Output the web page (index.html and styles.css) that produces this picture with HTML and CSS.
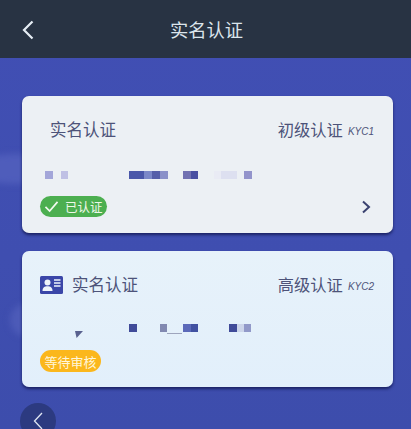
FILE: index.html
```html
<!DOCTYPE html>
<html lang="zh">
<head>
<meta charset="utf-8">
<title>实名认证</title>
<link rel="stylesheet" href="styles.css">
</head>
<body>
<div class="page">
  <header class="topbar">
    <svg class="back" viewBox="0 0 12 20" aria-hidden="true"><path d="M10.5 1.5 2 10l8.500 8.500"/></svg>
    <h1 class="title">实名认证</h1>
  </header>
  <span class="blob blob-a"></span>
  <span class="blob blob-b"></span>
  <main class="content">
    <section class="card card-basic">
      <div class="head">
        <span class="name name-indent">实名认证</span>
        <span class="level">初级认证<i class="kyc">KYC1</i></span>
      </div>
      <div class="mosaic mosaic-basic"></div>
      <div class="foot">
        <span class="badge badge-ok">
          <svg class="tick" viewBox="0 0 16 14" aria-hidden="true"><path d="M1.500 7.500 6 12 14.500 2"/></svg>已认证
        </span>
        <svg class="more" viewBox="0 0 10 14" aria-hidden="true"><path d="M2 1.500 8 7l-6 5.500"/></svg>
      </div>
    </section>
    <section class="card card-pending">
      <div class="head">
        <span class="name-wrap">
          <svg class="idcard" viewBox="0 0 23 18" aria-hidden="true">
            <rect width="23" height="18" rx="1.500" fill="#3a46a8"/>
            <circle cx="7.500" cy="6.500" r="3" fill="#eef3fb"/>
            <path d="M2.500 15c0-3.500 2-4.800 5-4.800s5 1.300 5 4.800z" fill="#eef3fb"/>
            <path d="M14 4h6.500M14 7h6.500M14 10h6.500" stroke="#eef3fb" stroke-width="1.300"/>
          </svg>
          <span class="name">实名认证</span>
        </span>
        <span class="level">高级认证<i class="kyc">KYC2</i></span>
      </div>
      <div class="mosaic mosaic-pending"></div>
      <div class="foot">
        <span class="badge badge-wait">等待审核</span>
      </div>
    </section>
  </main>
  <button class="float-back" type="button" aria-label="返回">
    <svg viewBox="0 0 12 20" aria-hidden="true"><path d="M10 2 2.500 10l7.500 8"/></svg>
  </button>
</div>
</body>
</html>
```
FILE: styles.css
```css
* { box-sizing: border-box; }
html, body { margin: 0; padding: 0; }
body {
  width: 411px;
  height: 429px;
  overflow: hidden;
  font-family: "Noto Sans CJK SC", "Liberation Sans", sans-serif;
}
.page {
  position: relative;
  width: 411px;
  height: 429px;
  overflow: hidden;
  background: linear-gradient(180deg, #414fb4 0%, #3f4eb0 60%, #3d4dac 100%);
}
.topbar {
  position: relative;
  height: 58px;
  background: #283343;
  display: flex;
  align-items: center;
  justify-content: center;
}
.back {
  position: absolute;
  left: 22px;
  top: 20px;
  width: 12px;
  height: 20px;
  fill: none;
  stroke: #e6eef4;
  stroke-width: 2.200;
}
.title {
  margin: 0 0 0 2px;
  font-size: 18.300px;
  font-weight: 400;
  line-height: 24px;
  color: #dce5ec;
}
.blob {
  position: absolute;
  border-radius: 50%;
}
.blob-a {
  left: -30px;
  top: 154px;
  width: 90px;
  height: 30px;
  background: #4f5dbb;
  filter: blur(3px);
}
.blob-b {
  left: 10px;
  top: 304px;
  width: 30px;
  height: 32px;
  background: #4d5bb8;
  filter: blur(3px);
}
.content {
  position: relative;
  padding: 38px 18px 0 22px;
  display: flex;
  flex-direction: column;
  gap: 18px;
}
.card {
  border-radius: 7px;
  padding: 21px 19px 16px 18px;
  box-shadow: 0 2px 3px rgba(18, 22, 80, .8);
}
.card-basic {
  height: 137px;
  background: #ecf0f4;
}
.card-pending {
  height: 136px;
  background: linear-gradient(180deg, #e7f2fa 0%, #e2effb 100%);
}
.head {
  display: flex;
  justify-content: space-between;
  align-items: center;
  height: 24px;
  color: #4d5379;
}
.name {
  font-size: 16.500px;
  line-height: 24px;
}
.name-indent { margin-left: 10px; }
.name-wrap {
  display: flex;
  align-items: center;
  gap: 9px;
}
.idcard {
  width: 23px;
  height: 18px;
  margin-top: 1px;
}
.level {
  font-size: 16.300px;
  line-height: 24px;
  display: flex;
  align-items: center;
}
.kyc {
  margin: 5px 0 0 5px;
  font-family: "Liberation Sans", sans-serif;
  font-size: 10px;
  font-style: italic;
}
.mosaic {
  position: relative;
  width: 212px;
  height: 8px;
  margin-left: 4px;
  filter: blur(.4px);
}
.mosaic-basic {
  margin-top: 30px;
  background: linear-gradient(90deg,
    transparent 1px, #a3a6d9 1px 9px, transparent 9px 17px, #bfc0e4 17px 24px, transparent 24px 85px,
    #4a57a9 85px 100px, #7b88c8 100px 108px, #555fa9 108px 116px, #8b91c9 116px 124px, transparent 124px 139px,
    #7272b2 139px 147px, #4a50a2 147px 154px, transparent 154px 170px,
    #e9ebf4 170px 177px, #dde0f0 177px 193px, transparent 193px 200px, #9394cb 200px 208px, transparent 208px);
}
.mosaic-pending {
  margin-top: 28px;
  background: linear-gradient(90deg,
    transparent 85px, #404b99 85px 93px, transparent 93px 116px, #8189b1 116px 123px, transparent 123px 139px,
    #5b69b9 139px 147px, #4151a1 147px 154px, transparent 154px 185px,
    #404b99 185px 193px, #ccd5ea 193px 200px, #9199c9 200px 207px, transparent 207px);
}
.mosaic-pending::before {
  content: "";
  position: absolute;
  left: 31px;
  top: 7px;
  width: 8px;
  height: 7px;
  background: #59618f;
  clip-path: polygon(0 0, 100% 0, 20% 100%);
}
.mosaic-pending::after {
  content: "";
  position: absolute;
  left: 123px;
  top: 9px;
  width: 15px;
  height: 1px;
  background: #9ea5bd;
}
.foot {
  display: flex;
  justify-content: space-between;
  align-items: center;
  margin-top: 17px;
}
.card-pending .foot { margin-top: 18px; }
.badge {
  display: inline-flex;
  align-items: center;
  height: 21px;
  border-radius: 11px;
  font-size: 12.500px;
  line-height: 21px;
  color: #eef8e8;
}
.badge-ok {
  width: 67px;
  padding-left: 4px;
  background: #4caf50;
}
.tick {
  width: 15px;
  height: 13px;
  margin-right: 6px;
  fill: none;
  stroke: #f2faf0;
  stroke-width: 1.800;
}
.badge-wait {
  width: 61px;
  height: 22px;
  justify-content: center;
  font-size: 13px;
  color: #fff6da;
  background: #fbb71c;
}
.more {
  width: 10px;
  height: 14px;
  margin-right: 3px;
  fill: none;
  stroke: #3a4270;
  stroke-width: 2;
}
.float-back {
  position: absolute;
  left: 20px;
  top: 403px;
  width: 36px;
  height: 36px;
  padding: 0;
  border: 0;
  border-radius: 50%;
  background: #2c3a80;
  display: flex;
  align-items: center;
  justify-content: center;
}
.float-back svg {
  width: 12px;
  height: 20px;
  fill: none;
  stroke: #dfe6f2;
  stroke-width: 1.300;
}
```
